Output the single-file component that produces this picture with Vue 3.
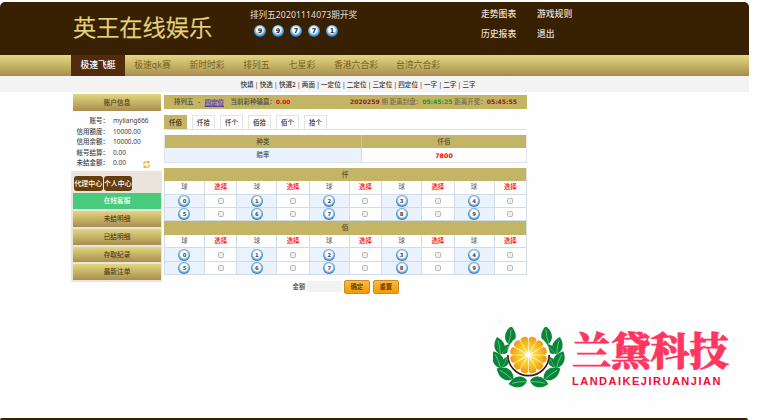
<script setup>
const results = [9, 9, 7, 7, 1]
const nav = [
  { label: '极速飞艇', width: 54, active: true },
  { label: '极速qk赛', width: 55 },
  { label: '新时时彩', width: 54 },
  { label: '排列五', width: 45 },
  { label: '七星彩', width: 46 },
  { label: '香港六合彩', width: 62 },
  { label: '台湾六合彩', width: 62 },
]
const modes = ['快填', '快选', '快選2', '两面', '一定位', '二定位', '三定位', '四定位', '一字', '二字', '三字']
const account = [
  ['账号', 'myliang666'],
  ['信用额度', '10000.00'],
  ['信用余额', '10000.00'],
  ['帐号结算', '0.00'],
  ['未结金额', '0.00'],
]
const menu = ['未结明细', '已结明细', '存取纪录', '最新注单']
const tabs = ['仟佰', '仟拾', '仟个', '佰拾', '佰个', '拾个']
const groups = ['仟', '佰']
const rows = [[0, 1, 2, 3, 4], [5, 6, 7, 8, 9]]
const slices = Array.from({ length: 12 }, (_, i) => i * 30)
</script>

<template>
  <div class="page">
    <header class="header">
      <h1 class="brand">英王在线娱乐</h1>
      <div class="draw">
        <div class="issue">排列五<span>20201114073</span>期开奖</div>
        <div class="results"><i v-for="(n, i) in results" :key="i" class="result">{{ n }}</i></div>
      </div>
      <div class="links"><a>走势图表</a><a>游戏规则</a><a>历史报表</a><a>退出</a></div>
    </header>
    <nav class="nav">
      <a v-for="n in nav" :key="n.label" :class="{ active: n.active }" :style="{ width: n.width + 'px' }">{{ n.label }}</a>
    </nav>
    <div class="modes">
      <template v-for="(m, i) in modes" :key="m"><b v-if="i">|</b><a>{{ m }}</a></template>
    </div>
    <div class="content">
      <aside class="side">
        <div class="gold title">账户信息</div>
        <div class="account">
          <div v-for="(a, i) in account" :key="a[0]" class="line">
            <span class="key">{{ a[0] }}：</span><span class="val">{{ a[1] }}</span>
            <svg v-if="i === 4" class="refresh" viewBox="0 0 8 8"><path d="M1 4V2.500Q1 1 3 1h3M5 0l2 1.200L5 2.700M7 4v1.500Q7 7 5 7H2M3 5.300L1 6.800 3 8" /></svg>
          </div>
        </div>
        <div class="panel">
          <div class="centers"><a>代理中心</a><a>个人中心</a></div>
          <div class="service">在线客服</div>
          <div v-for="m in menu" :key="m" class="gold item">{{ m }}</div>
        </div>
      </aside>
      <main class="main">
        <div class="status">
          <div class="game">排列五<span class="dash">-</span><em>四定位</em><span class="profit">当前彩种输赢：</span><b>0.00</b></div>
          <div class="timer"><b>2020259</b> 期 距离封盘：<b class="green">05:45:25</b> 距离开奖：<b>05:45:55</b></div>
        </div>
        <div class="tabs"><a v-for="(t, i) in tabs" :key="t" :class="{ on: i === 0 }">{{ t }}</a></div>
        <div class="odds">
          <div class="head">种类</div><div class="head">仟佰</div>
          <div class="rate">赔率</div><div class="price">7800</div>
        </div>
        <div class="board">
          <section v-for="g in groups" :key="g">
            <div class="group">{{ g }}</div>
            <div class="cells">
              <template v-for="c in 5" :key="c"><div>球</div><div class="pick">选择</div></template>
            </div>
            <div v-for="(r, i) in rows" :key="i" class="cells">
              <template v-for="n in r" :key="n"><div class="tint"><i class="ball">{{ n }}</i></div><div><i class="check"></i></div></template>
            </div>
          </section>
        </div>
        <div class="bet"><span>金额</span><i class="amount"></i><button>确定</button><button>重置</button></div>
      </main>
    </div>
    <footer class="foot"></footer>
    <div class="logo">
      <svg class="emblem" viewBox="0 0 72 64">
        <defs>
          <radialGradient id="juice" gradientUnits="userSpaceOnUse" cx="35.500" cy="28" r="19">
            <stop offset="0" stop-color="#ffe94a" /><stop offset=".55" stop-color="#fcc71d" /><stop offset="1" stop-color="#ef9516" />
          </radialGradient>
          <g id="leaf">
            <path d="M1-9.500C6-4 7 1 4.500 5Q2 9-1 9C-7 4-6-4 1-9.500Z" fill="#078838" />
            <path d="M.8-6Q1 1-1.500 9" fill="none" stroke="#d5ecd9" stroke-width=".45" />
          </g>
          <g id="branch">
            <use href="#leaf" transform="translate(17 8.500) rotate(2)" />
            <use href="#leaf" transform="translate(6 19) rotate(-18) scale(.95)" />
            <use href="#leaf" transform="translate(13 22) rotate(35) scale(.65)" />
            <use href="#leaf" transform="translate(4.500 33) rotate(-30)" />
            <use href="#leaf" transform="translate(12 35) rotate(20) scale(.62)" />
            <use href="#leaf" transform="translate(12 47) rotate(-62) scale(1.050)" />
            <use href="#leaf" transform="translate(25 55.500) rotate(-105) scale(1)" />
          </g>
        </defs>
        <use href="#branch" /><use href="#branch" transform="translate(71 0) scale(-1 1)" />
        <circle cx="35.500" cy="28.500" r="21.500" fill="#fff" />
        <path d="M14.800 28A20.700 20.700 0 0 0 56.200 28" fill="none" stroke="#38200d" stroke-width="1.700" />
        <path v-for="a in slices" :key="a" d="M35.500 26L31.700 13Q31.300 9.300 35.500 9.300T39.300 13Z" fill="url(#juice)" :transform="`rotate(${a + 15} 35.5 28)`" />
      </svg>
      <div class="words"><div class="cn">兰黛科技</div><div class="en">LANDAIKEJIRUANJIAN</div></div>
    </div>
  </div>
</template>

<style>
body { margin: 0; background: #fefefe; }
</style>

<style scoped>
* { box-sizing: border-box; }
i, em { font-style: normal; }
.page { position: relative; width: 757px; height: 420px; overflow: hidden; padding-top: 2px; display: flex; flex-direction: column; font-family: "Noto Sans", "Noto Sans CJK SC", sans-serif; font-size: 6.4px; font-weight: 500; color: #444; }
.header { width: 749px; height: 52.500px; flex: none; background: #382103; border-radius: 5px 5px 0 0; display: flex; color: #e8dfd2; }
.brand { margin: 7px 0 0 73px; width: 177px; font: 350 23.200px/34px "Noto Sans CJK SC", sans-serif; color: #e5d47c; -webkit-text-stroke: .25px #e5d47c; white-space: nowrap; }
.draw { width: 231px; padding-top: 7px; }
.issue { font-size: 8.600px; line-height: 13px; white-space: nowrap; font-weight: 400; }
.issue span { letter-spacing: .13px; }
.results { display: flex; gap: 6px; padding: 3px 0 0 4px; }
.result { width: 12px; height: 12px; border-radius: 50%; display: grid; place-items: center; background: radial-gradient(circle at 48% 42%, #fff 0 32%, #65b4e8 52%, #1761a8 75%); color: #222; font: bold 6.500px/12px "DejaVu Sans", sans-serif; }
.links { padding-top: 2px; display: grid; grid-template-columns: 56px 56px; grid-template-rows: 20px 20px; font-size: 8.800px; line-height: 20px; white-space: nowrap; }
.nav { width: 749px; height: 21.500px; flex: none; display: flex; padding-left: 71px; background: linear-gradient(#e4d783, #c3b063 55%, #a58b4f); font-size: 8.800px; font-weight: 400; line-height: 21px; color: #79601f; text-align: center; white-space: nowrap; }
.nav .active { background: #522b0c; color: #fff; font-weight: 500; }
.modes { width: 749px; height: 16px; flex: none; background: #f3f3f3; display: flex; padding-left: 240.500px; font-size: 6.560px; line-height: 17px; color: #333; white-space: nowrap; }
.modes b { width: 6.100px; text-align: center; font-weight: 400; }
.content { display: flex; gap: 2px; padding: 2px 0 0 71px; }
.side { width: 91px; white-space: nowrap; }
.gold { background: linear-gradient(#e1d780, #c2af63 55%, #a88e51); color: #503d19; text-align: center; font-size: 6.700px; }
.title { height: 16.500px; margin: 0 1px 0 2px; line-height: 17px; }
.account { padding-top: 5.500px; height: 60.500px; }
.line { display: flex; height: 10.600px; line-height: 10.600px; font-size: 6.500px; }
.key { width: 38px; text-align: right; }
.val { margin-left: 4px; font-weight: 400; }
.refresh { width: 7px; height: 7px; margin: 2.500px 12.500px 0 auto; fill: none; stroke: #edb52e; stroke-width: 1.600; }
.panel { background: #ebe4dc; height: 111px; padding: 5px 1px 1px 2px; }
.centers { display: flex; gap: 1px; padding-left: 1px; }
.centers a { width: 28.500px; height: 15px; border-radius: 3px; background: #653d0b; color: #fff; text-align: center; font-size: 6.900px; line-height: 15px; }
.service { margin-top: 2px; height: 16px; background: #48cb7d; color: #fff; text-align: center; font-size: 6.700px; line-height: 16px; }
.item { margin-top: 2px; height: 15.800px; line-height: 16px; }
.main { width: 363px; padding-top: 1px; }
.status { height: 14px; background: #c3b466; display: flex; justify-content: space-between; padding: 0 10px; line-height: 14px; color: #4f4937; font-size: 6.500px; white-space: nowrap; }
.game { display: flex; }
.dash { width: 11px; text-align: center; }
.game em { color: #5a3cae; text-decoration: underline; background: #ab9c88; line-height: 7px; height: 7px; margin: 3.500px 6.500px 0 0; }
.game b { color: #f00; font: bold 5.800px/14px "DejaVu Sans", sans-serif; }
.timer { color: #776c45; }
.timer b { color: #94270d; font: bold 6.100px/14px "DejaVu Sans", sans-serif; }
.timer .green { color: #15a01b; }
.tabs { display: flex; gap: 5px; margin-top: 5.500px; height: 15px; border-bottom: 1px solid #e3e1d5; }
.tabs a { width: 23px; height: 14px; border: 1px solid #e4e4e1; border-bottom: 0; text-align: center; line-height: 13px; color: #222; }
.tabs .on { background: #c3b466; border-color: #c3b466; }
.odds { margin-top: 5px; display: grid; grid-template-columns: 196px 1fr; grid-template-rows: 13.500px 13.500px; text-align: center; line-height: 13px; border: 1px solid #dfe4e8; border-top: 0; }
.head, .group { background: #c3b466; color: #4e4835; }
.head + .head { border-left: 1px solid #d3c98f; }
.rate { background: #eaf2fd; }
.price { border-left: 1px solid #cbdced; color: #f00; font: bold 6.300px/15px "DejaVu Sans", sans-serif; }
.board { margin-top: 5px; border: solid #d5dde5; border-width: 0 1px 0 0; }
.group { height: 13.700px; line-height: 14px; text-align: center; font-size: 6.700px; }
.cells { display: grid; grid-template-columns: repeat(5, 40fr 32.500fr); height: 13.400px; }
.cells > div { display: flex; align-items: center; justify-content: center; border: solid #d0dce8; border-width: 0 0 1px 1px; line-height: 12px; color: #777; }
.cells .pick { color: #f00; }
.cells .tint { background: #eaf2fd; }
.ball { width: 12px; height: 12px; flex: none; border-radius: 50%; background: radial-gradient(circle at 50% 45%, #fff 0 38%, #8cc0e6 52%, #3476ae 70%); display: grid; place-items: center; color: #444; font: bold 5.300px/12px "DejaVu Sans", sans-serif; }
.check { width: 6px; height: 6px; border: 1px solid #b7b7b7; border-radius: 1.500px; background: #f0f0f0; }
.bet { display: flex; align-items: center; padding: 4.500px 0 0 128.500px; line-height: 14px; }
.amount { width: 35px; height: 11px; margin: 0 1.500px 0 2px; background: #f2f2f2; }
.bet button { width: 26px; height: 14px; margin-right: 3px; padding: 0; border: 1px solid #cc8b26; border-radius: 2px; background: linear-gradient(#f8bd3d, #f39905); color: #4c2c00; font: 500 6.400px/11px "Noto Sans CJK SC", sans-serif; }
.foot { margin-top: auto; flex: none; width: 748px; height: 2px; background: #382103; border-radius: 3px 3px 0 0; }
.logo { position: absolute; left: 493px; top: 327px; display: flex; }
.emblem { width: 72px; height: 64px; flex: none; }
.words { padding-left: 7px; white-space: nowrap; }
.cn { height: 45px; font: 900 39.200px/43px "Noto Serif CJK SC", "Noto Sans CJK SC", serif; color: #ff3562; -webkit-text-stroke: .7px #ff3562; }
.en { margin-top: 3px; font: bold 11px/12px "Liberation Sans", sans-serif; letter-spacing: 1.500px; color: #f00b39; }
</style>
